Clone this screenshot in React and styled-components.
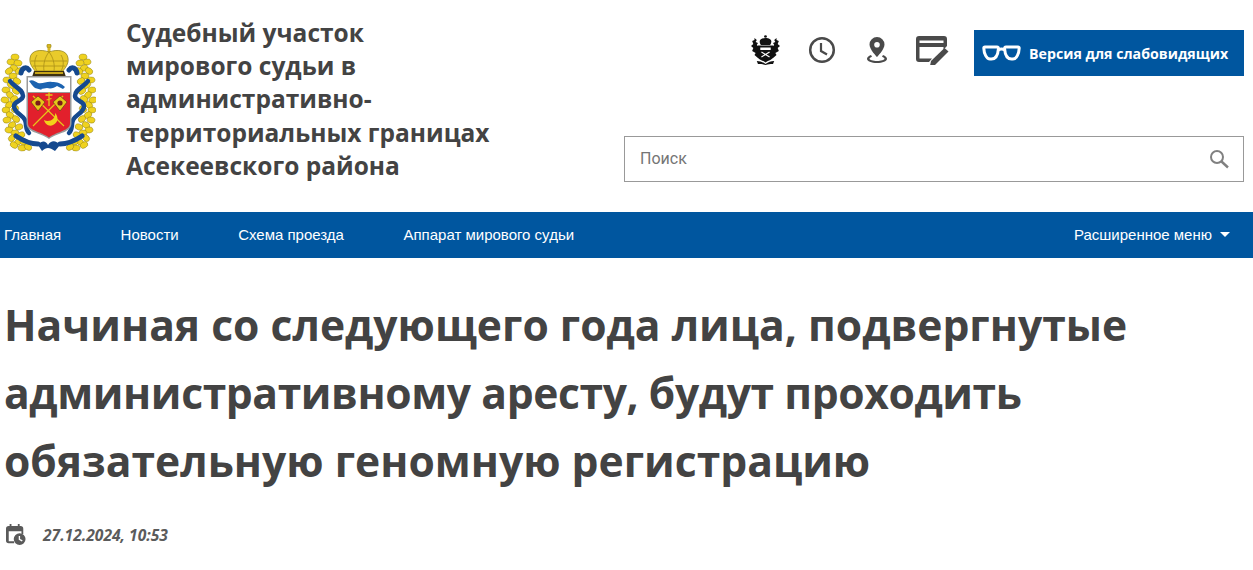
import React from 'react';
import styled, { createGlobalStyle } from 'styled-components';

const Global = createGlobalStyle`
    html, body { margin: 0; padding: 0; background: #fff; }
    body { font-family: "Open Sans", sans-serif; color: #434343; overflow: hidden; }
`

const Header = styled.header`
    display: flex;
    justify-content: space-between;
    height: 212px;
    padding-right: 9px;
`

const Brand = styled.div`
    display: flex;
    align-items: flex-start;
`

const Logo = styled.svg`
    width: 96px;
    height: 110px;
    margin-top: 44px;
    flex-shrink: 0;
`

const Title = styled.div`
    width: 366px;
    margin: 16px 0 0 30px;
    font-size: 24.5px;
    font-weight: 700;
    line-height: 33.2px;
    color: #434343;
`

const Tools = styled.div`
    width: 620px;
    display: flex;
    flex-direction: column;
    align-items: stretch;
`

const TopRow = styled.div`
    display: flex;
    justify-content: flex-end;
    align-items: center;
    margin-top: 30px;
    height: 46px;
`

const IconLink = styled.a`
    display: flex;
    width: ${p => p.$w}px;
    margin-right: ${p => p.$gap}px;
    margin-bottom: 6px;
    justify-content: center;
    color: #4a4a4a;
`

const EyeButton = styled.button`
    display: flex;
    align-items: center;
    gap: 8px;
    width: 270px;
    height: 46px;
    padding: 0 0 0 8px;
    border: 0;
    background: #00569f;
    color: #fff;
    font-family: "Open Sans", sans-serif;
    font-size: 14.2px;
    font-weight: 700;
`

const Search = styled.div`
    display: flex;
    align-items: center;
    justify-content: space-between;
    height: 46px;
    margin-top: 60px;
    padding: 0 14px 0 15px;
    box-sizing: border-box;
    border: 1px solid #999;
`

const SearchInput = styled.input`
    flex: 1;
    border: 0;
    outline: 0;
    padding: 0 0 2px;
    font-family: "Roboto", sans-serif;
    font-size: 16px;
    color: #444;
    &::placeholder { color: #757575; opacity: 1; }
`

const Nav = styled.nav`
    display: flex;
    align-items: center;
    justify-content: space-between;
    box-sizing: border-box;
    height: 46px;
    background: #00569f;
    padding: 0 23px 1px 4px;
`

const NavList = styled.div`
    display: flex;
    gap: 59.5px;
`

const NavItem = styled.a`
    display: flex;
    align-items: center;
    font-family: "Liberation Sans", Arial, sans-serif;
    font-size: 15px;
    color: #fff;
`

const Caret = styled.span`
    width: 0;
    height: 0;
    margin-left: 8px;
    border-left: 5px solid transparent;
    border-right: 5px solid transparent;
    border-top: 5px solid #fff;
`

const Article = styled.main`
    padding: 32px 4px 0;
`

const Heading = styled.h1`
    margin: 0;
    font-size: 42.6px;
    font-weight: 700;
    line-height: 68px;
    color: #434343;
`

const TightWords = styled.span`
    letter-spacing: -0.4px;
`

const Meta = styled.div`
    display: flex;
    align-items: center;
    gap: 17px;
    margin-top: 30px;
    padding-left: 2px;
`

const DateText = styled.span`
    font-size: 15.6px;
    font-weight: 700;
    font-style: italic;
    color: #5b5b5b;
`

// leaves of the wreath, left side, in page coordinates; the right side is mirrored
const leaves = [
    [15, 58], [11, 63], [18, 64], [14, 69], [9, 72], [19, 72], [13, 77], [7, 81],
    [17, 82], [11, 86], [6, 91], [16, 92], [10, 96], [5, 101], [14, 100], [9, 106],
    [6, 111], [15, 110], [10, 116], [7, 121], [16, 120], [12, 126], [9, 131], [19, 128],
    [15, 134], [12, 139], [21, 136], [18, 143], [14, 146], [24, 143], [22, 149], [28, 148],
]

const Wreath = () => (
    <g fill="#efd21f" stroke="#7d7012" strokeWidth="0.4">
        {leaves.map(([x, y]) => (
            <ellipse key={`${x}-${y}`} cx={x} cy={y} rx="4" ry="3" transform={`rotate(${(x * 37 + y * 13) % 90 - 45} ${x} ${y})`} />
        ))}
    </g>
)

const Ribbon = () => (
    <g fill="none" stroke="#15498f" strokeLinecap="round" strokeLinejoin="round">
        <path d="M21 74c1-5 5-7 8-3" strokeWidth="5" />
        <path d="M10 82c4 6 13 8 13 15 0 5-9 5-9 10 0 7 8 8 11 14 2 5 0 9 4 13" strokeWidth="4.500" />
        <path d="M16 137c6 4 14 8 22 8" strokeWidth="5" />
    </g>
)

const Arms = () => (
    <Logo viewBox="0 45 96 110">
        <Wreath />
        <Ribbon />
        <g transform="matrix(-1 0 0 1 98 0)">
            <Wreath />
            <Ribbon />
        </g>
        <path d="M38 146c4-5 8-4 10 0 3-5 8-5 12 0l-5 6c-3-2-5-3-7-3s-4 1-6 3z" fill="#15498f" />
        {/* crown */}
        <circle cx="49" cy="47" r="2.200" fill="#d9b820" stroke="#7d7012" strokeWidth="0.5" />
        <path d="M47.500 49h3v4h-3z" fill="#d9b820" />
        <path d="M49 53c-8-3-18-2-19 6-1 6 3 10 5 13h28c2-3 6-7 5-13-1-8-11-9-19-6z" fill="#e9cb2b" stroke="#8a7a10" strokeWidth="0.7" />
        <path d="M49 53c-4 5-6 12-5 19M49 53c4 5 6 12 5 19M37 56c-3 5-3 11 0 16M61 56c3 5 3 11 0 16M31 62h36M33 67h32" stroke="#a98f18" strokeWidth="0.8" fill="none" />
        <path d="M34 72h30l2 6H32z" fill="#3d3010" />
        <path d="M35 73h28v2H35z" fill="#c7a51a" />
        {/* shield */}
        <path d="M26.500 77h45v47c0 10-13 9-22.500 16-9.500-7-22.500-6-22.500-16z" fill="#9a9a9a" />
        <path d="M28 78.500h42v14.500H28z" fill="#fff" />
        <path d="M29 82c3-2 6 0 9 2 5 1 9-2 14-1 5 0 9 1 13 5l-2 2-6-3c-3 2-6 3-10 2l-6 1 1 1-7-2c-3-2-4-5-6-7z" fill="#1c63b0" />
        <path d="M28 94h42v30c0 8-12 8-21 14.500-9-6.500-21-6.500-21-14.500z" fill="#e2202c" />
        <g stroke="#e6c619" strokeWidth="1.300" fill="none">
            <path d="M33 127l30-30M64 127L33 97" strokeWidth="1.200" />
            <path d="M49 93v14M45.500 96h7M46.500 101l5-1.500" />
        </g>
        <path d="M31 103l7-6 7 6-7 9z" fill="#e6c619" stroke="#3a2a10" strokeWidth="0.5" />
        <path d="M53 103l7-6 7 6-7 9z" fill="#e6c619" stroke="#3a2a10" strokeWidth="0.5" />
        <circle cx="38" cy="104" r="2.600" fill="#7c1a1a" />
        <circle cx="60" cy="104" r="2.600" fill="#7c1a1a" />
        <path d="M55 114c1 6-6 10-11 7 1 4 5 7 9 5 5-2 6-8 2-12z" fill="#f2d21a" />
    </Logo>
)

const SmallArms = () => (
    <svg width="29" height="30" viewBox="2 0 25 30" preserveAspectRatio="none" fill="#111">
        <circle cx="14.500" cy="1.500" r="1.200" />
        <path d="M14.500 3c-3 0-5 1.500-5 3.500 0 1.500.5 2.500 1 3.500h8c.5-1 1-2 1-3.500 0-2-2-3.500-5-3.500z" />
        <path d="M5 3l2 2-1 2 2 1-1 2 2 2-1 2 1 2-1 3 2 2 1 3-3-1-3-3 1-2-3-2 1-3-2-2 2-2-1-3 2-1z" />
        <path d="M24 3l-2 2 1 2-2 1 1 2-2 2 1 2-1 2 1 3-2 2-1 3 3-1 3-3-1-2 3-2-1-3 2-2-2-2 1-3-2-1z" />
        <path d="M8 10.500h13v11c0 3.500-4 3.500-6.500 6-2.500-2.500-6.500-2.500-6.500-6z" />
        <path d="M10 12.500h9v2.500h-9z" fill="#fff" />
        <path d="M11 17l7 5M18 17l-7 5" stroke="#fff" strokeWidth="1" />
        <path d="M7 26c3 0 5 1 7.500 3 2.500-2 4.500-3 7.500-3l-1 3c-3 0-4 0-6.500 1-2.500-1-3.500-1-6.500-1z" />
    </svg>
)

const Clock = () => (
    <svg width="28" height="28" viewBox="0 0 28 28" fill="none" stroke="currentColor" strokeWidth="2.500">
        <circle cx="14" cy="14" r="11.800" />
        <path d="M13 7v8l6 3.500" strokeWidth="2.200" />
    </svg>
)

const Pin = () => (
    <svg width="24" height="28" viewBox="0 0 24 28" fill="currentColor">
        <path fillRule="evenodd" d="M12 1a7.500 7.500 0 0 0-7.500 7.500C4.500 13.500 12 21 12 21s7.500-7.500 7.500-12.500A7.500 7.500 0 0 0 12 1zm0 5a2.800 2.800 0 1 1 0 5.600 2.800 2.800 0 0 1 0-5.600z" />
        <path d="M6 19c-2.500 1-4 2.200-4 3.800C2 25.500 6.500 27 12 27s10-1.500 10-4.200c0-1.600-1.500-2.800-4-3.800l-1 1.800c1.500.6 2.500 1.300 2.500 2 0 1.200-3.500 2.200-7.500 2.200s-7.500-1-7.500-2.200c0-.7 1-1.400 2.500-2z" />
    </svg>
)

const CardEdit = () => (
    <svg width="34" height="30" viewBox="0 0 34 30" fill="currentColor">
        <path fillRule="evenodd" d="M4 1h25a3 3 0 0 1 3 3v7l-3.500 3.500V12H4.500v11.500H17L14 27H4a3 3 0 0 1-3-3V4a3 3 0 0 1 3-3zm.5 4.500V8h24V5.500z" />
        <path d="M29.500 13l4 3.500L20 30l-5 1 1-5z" />
    </svg>
)

const Glasses = () => (
    <svg width="39" height="18" viewBox="0 0 39 18" fill="none" stroke="#fff" strokeWidth="3" strokeLinejoin="round">
        <path d="M3 3h12c1 0 1.500.7 1.400 1.800-.4 5-1.900 10.200-6.900 10.200H8C4.500 15 2 9.500 1.800 4.200 1.800 3.500 2.300 3 3 3z" />
        <path d="M36 3H24c-1 0-1.500.7-1.400 1.800.4 5 1.900 10.200 6.900 10.200H31c3.500 0 6-5.500 6.200-10.800 0-.7-.5-1.200-1.200-1.200z" />
        <path d="M16 6c2-1.200 5-1.200 7 0" />
    </svg>
)

const Magnifier = () => (
    <svg width="20" height="20" viewBox="0 0 20 20" fill="none" stroke="#808080" strokeWidth="2">
        <circle cx="8" cy="8" r="6" />
        <path d="M12.500 12.500L19 18.500" strokeWidth="2.400" />
    </svg>
)

const CalendarClock = () => (
    <svg width="20" height="22" viewBox="0 0 22 24" fill="#5a5a5a">
        <path fillRule="evenodd" d="M4 0h2v2h7V0h2v2h1a3 3 0 0 1 3 3v6h-2V8H3v11h6v2H3a3 3 0 0 1-3-3V5a3 3 0 0 1 3-3h1z" />
        <path fillRule="evenodd" d="M15 10a6.500 6.500 0 1 1 0 13 6.500 6.500 0 0 1 0-13zm-1 3v4.200l3.500 2 .8-1.300-2.800-1.500V13z" />
    </svg>
)

const App = () => (
    <>
        <Global />
        <Header>
            <Brand>
                <Arms />
                <Title>
                    Судебный участок мирового судьи в административно-территориальных границах Асекеевского района
                </Title>
            </Brand>
            <Tools>
                <TopRow>
                    <IconLink $w={29} $gap={28}><SmallArms /></IconLink>
                    <IconLink $w={28} $gap={29}><Clock /></IconLink>
                    <IconLink $w={24} $gap={26}><Pin /></IconLink>
                    <IconLink $w={34} $gap={25}><CardEdit /></IconLink>
                    <EyeButton><Glasses />Версия для слабовидящих</EyeButton>
                </TopRow>
                <Search>
                    <SearchInput placeholder="Поиск" />
                    <Magnifier />
                </Search>
            </Tools>
        </Header>
        <Nav>
            <NavList>
                <NavItem>Главная</NavItem>
                <NavItem>Новости</NavItem>
                <NavItem>Схема проезда</NavItem>
                <NavItem>Аппарат мирового судьи</NavItem>
            </NavList>
            <NavItem>Расширенное меню<Caret /></NavItem>
        </Nav>
        <Article>
            <Heading>
                Начиная со следующего года лица, подвергнутые <TightWords>административному аресту, будут проходить</TightWords> обязательную геномную регистрацию
            </Heading>
            <Meta>
                <CalendarClock />
                <DateText>27.12.2024, 10:53</DateText>
            </Meta>
        </Article>
    </>
)

export default App
